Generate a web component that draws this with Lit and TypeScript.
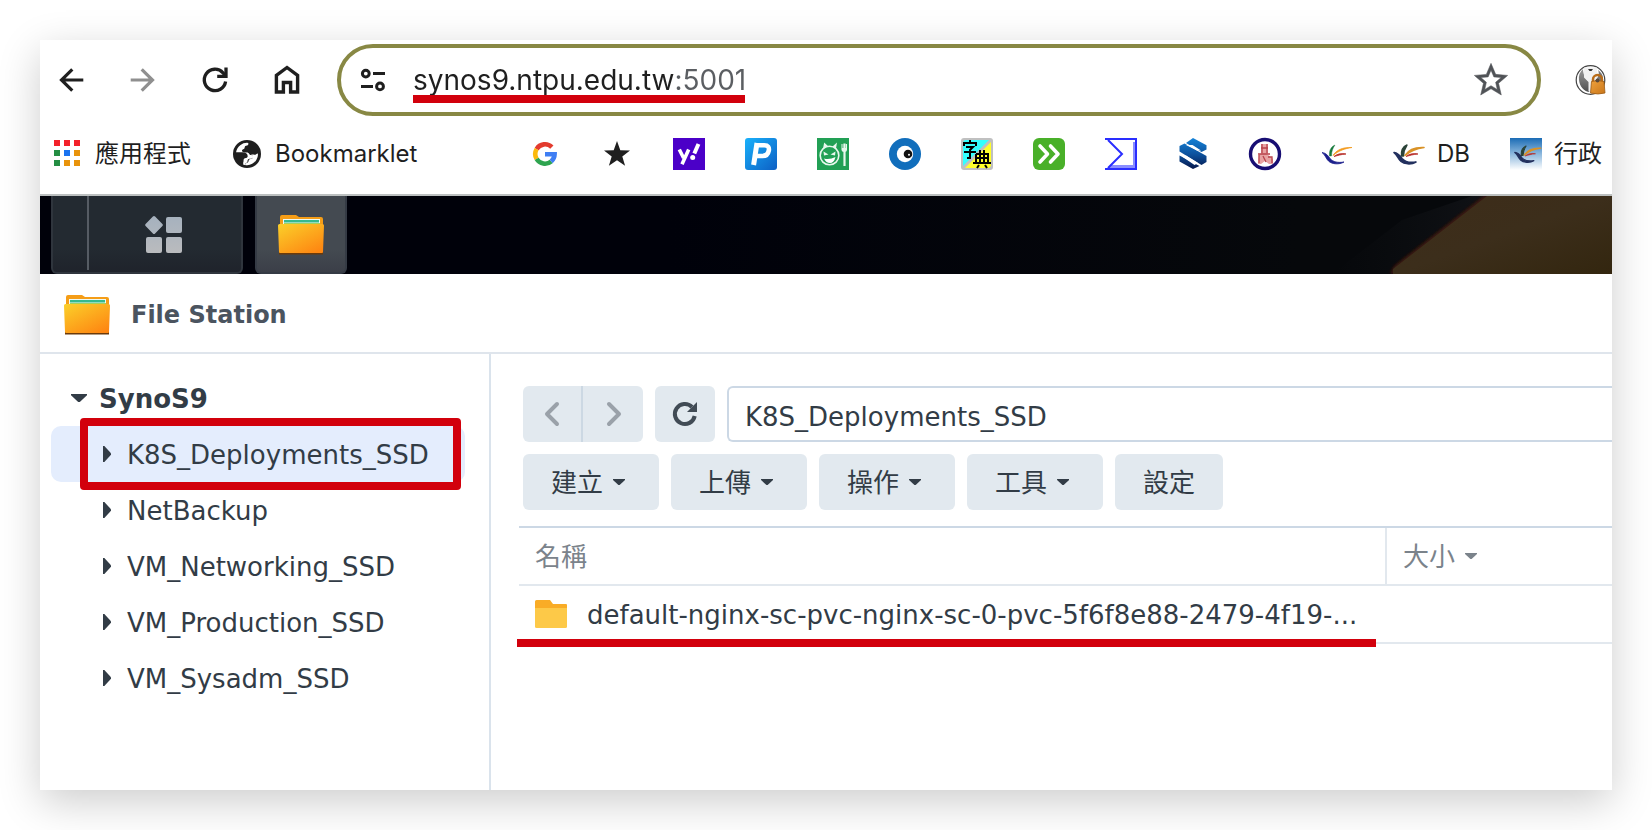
import { LitElement, html, css, svg, TemplateResult } from "lit";
import { customElement, property } from "lit/decorators.js";

const bird = (x: number, dark: boolean) => svg`
  <g transform="translate(${x} 0)" stroke-linejoin="round">
    <path d="M1 14.500c4 .5 6 3 8 6 3 3.500 8 4.500 14 3.500-5 3-12 2-15-.5-3-2.500-3.500-6.500-7-9z" fill=${dark ? "#22305e" : "#1c1f8c"} stroke=${dark ? "#22305e" : "#1c1f8c"} stroke-width=${dark ? 1.6 : 0.8}/>
    <path d="M8.500 18c-.5-5 1-9 5.500-11-2 3-3.500 6-3.500 11z" fill=${dark ? "#2a4338" : "#177a3c"} stroke=${dark ? "#2a4338" : "#177a3c"} stroke-width=${dark ? 1.4 : 0.4}/>
    <path d="M12 17.500c3-5 9-8.500 19-8-7 1-13 3-19 8z" fill="#f39a1f" stroke=${dark ? "#d99227" : "#f39a1f"} stroke-width=${dark ? 1.6 : 0.8}/>
    <path d="M13 18.500c3-2.500 7-3.500 12-2.500-5 .4-8 1.500-12 2.500z" fill="#b8262c" stroke="#b8322c" stroke-width=".8"/>
  </g>`;

const glyphs: Record<string, TemplateResult> = {
  back: html`<svg viewBox="0 0 32 32" fill="none" stroke="#1f1f1f" stroke-width="3.2"><path d="M28.300 16H6M17.300 5.300 6.500 16l10.800 10.700"/></svg>`,
  forward: html`<svg viewBox="0 0 32 32" fill="none" stroke="#8f8f8f" stroke-width="3.2"><path d="M3.700 16H26M14.700 5.300 25.500 16 14.700 26.700"/></svg>`,
  reload: html`<svg viewBox="0 0 32 32" fill="none" stroke="#1f1f1f" stroke-width="3.300"><path d="M26.600 17.500A10.700 10.700 0 1 1 24 8.800l2 2.600"/><path d="M27 3.600v8.700h-8.800"/></svg>`,
  home: html`<svg viewBox="0 0 32 32" fill="none" stroke="#1f1f1f" stroke-width="3.400"><path d="M5.400 11.300 16 3.500l10.600 7.800V28h-7V18.500h-7.200V28h-7z"/></svg>`,
  tune: html`<svg viewBox="0 0 24 24" fill="none" stroke="#1f1f1f" stroke-width="3"><circle cx="4.800" cy="5.600" r="3.400"/><path d="M12 5.600h12M0 18.400h12"/><circle cx="19" cy="18.400" r="3.400"/></svg>`,
  star: html`<svg viewBox="0 0 24 24" fill="#505357" stroke="#505357" stroke-width=".3"><path d="M22 9.240l-7.190-.62L12 2 9.190 8.630 2 9.240l5.460 4.730L5.820 21 12 17.270 18.180 21l-1.630-7.030L22 9.240zM12 15.400l-3.760 2.270 1-4.280-3.320-2.880 4.380-.38L12 6.100l1.710 4.040 4.380.38-3.320 2.880 1 4.280L12 15.400z"/></svg>`,
  keychain: html`<svg viewBox="0 0 32 32"><defs><linearGradient id="kg" x2="0" y2="1"><stop stop-color="#9a9a9a"/><stop offset="1" stop-color="#4e4e4e"/></linearGradient><linearGradient id="kl" x2="1" y2="1"><stop stop-color="#f0a23c"/><stop offset="1" stop-color="#c9761a"/></linearGradient></defs>
    <circle cx="15.500" cy="16" r="14.300" fill="#fff" stroke="#444" stroke-width="1.200"/>
    <path d="M8 5a12.500 12.500 0 0 0-4 11c.5 6 5 12 11 12V18C11 16 8 11 8 5z" fill="url(#kg)"/><path d="M23 6c2 4 0 9-5 12v11h3l7-15c0-3-2-6-5-8z" fill="#777"/>
    <path d="M9 3.500h13v10l-4 4.500v9l-2.500 2-2-2v-9L9 13.500z" fill="#f1f1f1"/><path d="M13 5h5l-1.500 2h-2z" fill="#333"/>
    <path d="M18 18v-2.500a4.500 4.500 0 0 1 9 0V18" fill="none" stroke="#b96c18" stroke-width="2.500"/><path d="M16.500 17.500q6-2 12.500 0l1 11.500q-7 2-14.500 0z" fill="url(#kl)" stroke="#9c5b14" stroke-width=".8"/><circle cx="22.500" cy="16.500" r="2" fill="#5b4a3a"/></svg>`,
  apps: html`<svg viewBox="0 0 32 32"><g fill="#f3222b"><path d="M3 2h6v6H3zM13 2h6v6h-6zM23 2h6v6h-6z"/></g><path d="M3 12h6v6H3zM3 22h6v6H3z" fill="#258e43"/><path d="M13 12h6v6h-6z" fill="#1a73f0"/><path d="M23 12h6v6h-6zM13 22h6v6h-6zM23 22h6v6h-6z" fill="#e8930b"/></svg>`,
  globe: html`<svg viewBox="0 0 32 32"><circle cx="16" cy="16" r="14" fill="#1f1f1f"/><path d="M5 14.500A11.200 11.200 0 0 1 17.300 4.900c.3 1.800-.3 2.400-2.300 2.900-1.800.4-.8 2.600-2.200 3.300-.8.5-2 .6-1.800 1.800.2 1.600 3.400 1.500 4.800 1.500 2.600 0 2.200 2.600 4.200 2.600 1.900 0 2.200 1.200 2 2.500-.4 1.800-2.400.9-4.200 1.500-2 .6-.6 3-2.200 3.700-1.200.6-1.800 1.200-1.600 2.200l-1.700-.1c-.3-1.800.3-2.800-.8-3.800-1-1-.4-2.500-1.600-3.600C8.500 18.300 6.500 16.800 5 14.500z" fill="#fff"/><path d="M5 14.300h6.500c3 0 5 1.200 5.200 3.700.1 1.800-1.400 2-2.800 2.200-1.600.2-1.200 2-1.400 3.300-.2 1-1 1.500-2 1.800A11.300 11.300 0 0 1 5 14.300z" fill="#1f1f1f"/><path d="M14 26.900c4.500 1 9-1.200 11.300-5 1.200-2 1.800-4 1.600-6.500-1.500 0-2 1.400-3.400 1.400-1.600 0-2-.6-3.500.2 2 .5 2.200 1.600 1.700 3-.4 1-1.700 1-3 1.300-1.500.4-.7 2.500-2 3.300-1.200.7-2.500.8-2.700 2.300z" fill="#fff"/></svg>`,
  google: html`<svg viewBox="0 0 32 32" fill="none" stroke-width="4.600"><path d="M7.600 11.150A9.700 9.700 0 0 1 22.860 9.140" stroke="#e33b2e"/><path d="M7.600 20.850a9.700 9.700 0 0 1 0-9.700" stroke="#fbb90b"/><path d="M22.200 23.430A9.700 9.700 0 0 1 7.600 20.850" stroke="#2ea44f"/><path d="M22.200 23.430A9.700 9.700 0 0 0 25.600 16.300H16" stroke="#3f7ef3"/></svg>`,
  solid: html`<svg viewBox="0 0 32 32"><path d="m16 3 3.300 9.200 9.700.3-7.700 6 2.800 9.300L16 22.300l-8.100 5.500 2.800-9.300-7.700-6 9.700-.3z" fill="#1f1f1f"/></svg>`,
  yahoo: html`<svg viewBox="0 0 32 32"><path d="M0 0h32v32H0z" fill="#4b00c8"/><g fill="none" stroke="#fff" stroke-width="3.600"><path d="m6.300 11.500 4.300 8.500M15.700 11.500 9 26.300"/><path d="m25.500 6-4.200 9.500" stroke-width="4"/></g><circle cx="19.700" cy="19.500" r="2.500" fill="#fff"/></svg>`,
  park: html`<svg viewBox="0 0 32 32"><defs><linearGradient id="pg" x2="1" y2="1"><stop stop-color="#19b1fb"/><stop offset="1" stop-color="#0d5fc4"/></linearGradient></defs><rect width="32" height="32" rx="3" fill="url(#pg)"/><path d="M10.800 7.200h8.500c4 0 5 2.300 4.500 5.300-.6 3.500-3 5.500-6.500 5.500h-6.500" fill="none" stroke="#fff" stroke-width="4.600"/><path d="m12 5-3.400 22" stroke="#fff" stroke-width="5"/></svg>`,
  devil: html`<svg viewBox="0 0 32 32"><path d="M0 0h32v32H0z" fill="#22a055"/><circle cx="12.500" cy="17.500" r="9.300" fill="none" stroke="#e8f7ed" stroke-width="1.600"/><path d="m6 10.500 1.200-6 4.300 4zM19 10.500l1-6-4.500 4z" fill="#e8f7ed"/><path d="m6.500 13.500 5 3-4.500 1zM18.500 13.500l-5 3 4.500 1z" fill="#e8f7ed"/><path d="M7 20.500q5.500 1.500 11.500-1.500-1.500 6-5.500 6T7 20.500z" fill="#fff"/><path d="M27.500 5.500V28" stroke="#e8f7ed" stroke-width="2.200"/><path d="M24.500 6h1v4h1.300V6h1.400v4h.8V6h1v6q0 2-2.700 2t-2.800-2z" fill="#e8f7ed"/></svg>`,
  eye: html`<svg viewBox="0 0 32 32"><circle cx="16" cy="16" r="16" fill="#116ebc"/><circle cx="16" cy="16" r="8.200" fill="#fff"/><circle cx="19" cy="16" r="4.300" fill="#111"/><circle cx="20" cy="16.800" r="1" fill="#fff"/></svg>`,
  dict: html`<svg viewBox="0 0 32 32"><rect width="32" height="32" rx="3" fill="#c0c0c0"/><path d="M4 2h24L2 28V4z" fill="#3ff"/><path d="M30 4v24l-2 2H4z" fill="#ffff2b"/><g fill="none" stroke="#000" stroke-width="2"><path d="M3 8V5h12v3M9 2v3M5 9h7l-3 3v8H6M3 14h12"/><path d="M15 16h12v9M15 16v9M19 12v13M23 12v13M15 20h12M12 25h18M18 27l-2 3M24 27l2 3"/></g></svg>`,
  chevrons: html`<svg viewBox="0 0 32 32"><rect width="32" height="32" rx="6" fill="#49b029"/><path d="m7 8 7.500 8L7 24M17.500 8l7.500 8-7.500 8" fill="none" stroke="#fff" stroke-width="3.600" stroke-linecap="round" stroke-linejoin="round"/></svg>`,
  sigma: html`<svg viewBox="0 0 32 32"><path d="M1 1h30v30H3l13-15z" fill="#fff"/><path d="M6 27h22V4h2.500v26H3z" fill="#8a8eff"/><path d="M0 1h31v30H0M3 2l14 14L3 30" fill="none" stroke="#2a2eff" stroke-width="2"/></svg>`,
  swirl: html`<svg viewBox="0 0 32 32"><defs><linearGradient id="sg" gradientUnits="userSpaceOnUse" x1="0" x2="0" y1="0" y2="31"><stop stop-color="#1583d8"/><stop offset=".55" stop-color="#0c4f9a"/><stop offset="1" stop-color="#06164a"/></linearGradient></defs><g fill="url(#sg)"><path d="M16 0 29.500 7.300v4.200l-5 2.500L9 5z"/><path d="m7.500 5.500 22 12.500v6l-5 3L2.500 13.500V8z"/><path d="M2.500 17.500 22.500 28 16 31 2.500 23.500z"/></g><path d="m9 7 6.500 0 8.500 5.500-4 0zM5 18.500l4-1 12 7.500-3.500 2z" fill="#fff"/></svg>`,
  seal: html`<svg viewBox="0 0 32 32"><circle cx="16" cy="16" r="14.500" fill="#fff" stroke="#180e73" stroke-width="3.400"/><path d="M12 6h7v10h-7zM10 16h8l6 5v5h-4l-4-3-4 3H9z" fill="#e8a3a3"/><path d="M13 6v9M18 6v9M12 10h7M9 16h12M10 17v8M14 18l3 6M19 19h4v6" fill="none" stroke="#b8434b" stroke-width="1.300"/></svg>`,
  bird: html`<svg viewBox="0 0 32 32">${bird(0, false)}</svg>`,
  birdDark: html`<svg viewBox="0 0 32 32">${bird(0, true)}</svg>`,
  birdSky: html`<svg viewBox="0 0 32 32"><defs><linearGradient id="bs" x2="0" y2="1"><stop stop-color="#1b6cb5"/><stop offset=".5" stop-color="#8db8dd"/><stop offset="1" stop-color="#fff"/></linearGradient></defs><path d="M0 0h32v32H0z" fill="url(#bs)"/><g transform="translate(4 2) scale(.86)">${bird(0, true)}</g></svg>`,
  grid: html`<svg viewBox="0 0 40 40"><defs><linearGradient id="gg" gradientUnits="userSpaceOnUse" x1="0" x2="0" y1="0" y2="40"><stop stop-color="#a5b1be"/><stop offset="1" stop-color="#bbbcbe"/></linearGradient></defs><g fill="url(#gg)"><path d="M9.900.6q1.100-1.100 2.200 0l7.300 7.300q1.100 1.100 0 2.200l-7.300 7.300q-1.100 1.100-2.200 0l-7.300-7.300q-1.100-1.100 0-2.200z" transform="translate(0 1)"/><rect x="23" y="2" width="16" height="16" rx="2"/><rect x="3" y="22" width="16" height="16" rx="2"/><rect x="23" y="22" width="16" height="16" rx="2"/></g></svg>`,
  files: html`<svg viewBox="0 0 48 42"><defs><linearGradient id="fg" x2=".8" y2="1"><stop stop-color="#fbd02a"/><stop offset="1" stop-color="#fe8712"/></linearGradient></defs><path d="M3 3q0-2 2-2h14l3 2h22q2 0 2 2v8H3z" fill="#f59d17"/><path d="M6 5h37v7H6z" fill="#eefaf3"/><path d="M7 6h35v2.500H7z" fill="#35b98f"/><path d="M7 9h36v2H7z" fill="#a3d05c"/><path d="M2 38h44v2.500H2z" fill="#6b3a0a"/><path d="M1 11.500q0-1.500 1.500-1.500h43q1.500 0 1.500 1.500L46 38q0 1-1 1H3q-1 0-1-1z" fill="url(#fg)"/></svg>`,
  prev: html`<svg viewBox="0 0 24 24"><path d="M17 2 7 12l10 10" fill="none" stroke="#9aa1a9" stroke-width="4" stroke-linecap="round" stroke-linejoin="round"/></svg>`,
  next: html`<svg viewBox="0 0 24 24"><path d="m8 2 10 10L8 22" fill="none" stroke="#9aa1a9" stroke-width="4" stroke-linecap="round" stroke-linejoin="round"/></svg>`,
  refresh: html`<svg viewBox="0 0 24 24"><path d="M21.700 14A10 10 0 1 1 19 5" fill="none" stroke="#414b55" stroke-width="4"/><path d="M24 0v10H14z" fill="#414b55"/></svg>`,
  folder: html`<svg viewBox="0 0 32 28"><path d="M0 1.500Q0 0 1.500 0H15l3 4h13q1 0 1 1v5H0z" fill="#f9ac26"/><path d="M0 8h32v18.500q0 1.500-1.500 1.500h-29Q0 28 0 26.500z" fill="#fdc948"/></svg>`,
};

@customElement("ui-icon")
class UiIcon extends LitElement {
  @property() name = "";
  static styles = css`
    :host { display: inline-flex; flex: none; width: 32px; height: 32px; }
    svg { display: block; width: 100%; height: 100%; overflow: visible; }
  `;
  render() {
    return glyphs[this.name] ?? html``;
  }
}

interface Bookmark { icon: string; title: string; label?: string; wide?: boolean; }

const bookmarks: Bookmark[] = [
  { icon: "apps", title: "應用程式", label: "應用程式" },
  { icon: "globe", title: "Bookmarklet", label: "Bookmarklet", wide: true },
  { icon: "google", title: "Google" },
  { icon: "solid", title: "Star" },
  { icon: "yahoo", title: "Yahoo" },
  { icon: "park", title: "P" },
  { icon: "devil", title: "Food" },
  { icon: "eye", title: "Eye" },
  { icon: "dict", title: "Dictionary" },
  { icon: "chevrons", title: "Next" },
  { icon: "sigma", title: "Sigma" },
  { icon: "swirl", title: "S" },
  { icon: "seal", title: "Seal" },
  { icon: "bird", title: "NTPU" },
  { icon: "birdDark", title: "DB", label: "DB" },
  { icon: "birdSky", title: "行政", label: "行政" },
];

@customElement("browser-chrome")
class BrowserChrome extends LitElement {
  static styles = css`
    :host { display: block; background: #fff; border-bottom: 2px solid #bcc0c0; font-family: Inter, "Noto Sans CJK TC", sans-serif; color: #1f1f1f; }
    button { padding: 0; border: 0; background: none; font: inherit; display: flex; flex: none; }
    .toolbar { display: flex; align-items: center; padding: 4px 5px 4px 15px; }
    .nav { display: flex; gap: 40px; margin-right: 34px; }
    .omnibox { flex: 1; min-width: 0; height: 72px; box-sizing: border-box; border: 4px solid #888844; border-radius: 36px; display: flex; align-items: center; padding: 0 26px 0 20px; }
    .tune { width: 24px; height: 24px; }
    .address { position: relative; flex: 1; min-width: 0; margin: 0 28px; display: flex; }
    .url { width: 100%; padding: 0; border: 0; outline: 0; font: 28px/40px Inter, sans-serif; color: #1f1f1f; -webkit-text-fill-color: transparent; background: linear-gradient(90deg, #1f1f1f 262px, #5b5e62 262px); -webkit-background-clip: text; background-clip: text; }
    .underline { position: absolute; left: 0; top: 35px; width: 332px; height: 8px; background: #d2000c; }
    .fav { width: 40px; height: 40px; }
    .ext { margin-left: 34px; }
    .bookmarks { display: flex; align-items: center; gap: 40px; height: 68px; padding: 0 0 6px 11px; white-space: nowrap; overflow: hidden; }
    .bookmark { display: flex; align-items: center; gap: 12px; flex: none; color: inherit; text-decoration: none; font-size: 24px; line-height: 32px; }
    .wide { width: 258px; }
  `;
  render() {
    return html`
      <div class="toolbar">
        <div class="nav">
          <button aria-label="Back"><ui-icon name="back"></ui-icon></button>
          <button aria-label="Forward"><ui-icon name="forward"></ui-icon></button>
          <button aria-label="Reload"><ui-icon name="reload"></ui-icon></button>
          <button aria-label="Home"><ui-icon name="home"></ui-icon></button>
        </div>
        <div class="omnibox">
          <button aria-label="Site information"><ui-icon class="tune" name="tune"></ui-icon></button>
          <div class="address">
            <input class="url" aria-label="Address" .value=${"synos9.ntpu.edu.tw:5001"} />
            <span class="underline"></span>
          </div>
          <button aria-label="Bookmark this page"><ui-icon class="fav" name="star"></ui-icon></button>
        </div>
        <button class="ext" aria-label="Password extension"><ui-icon name="keychain"></ui-icon></button>
      </div>
      <nav class="bookmarks">
        ${bookmarks.map((b) => html`<a class="bookmark ${b.wide ? "wide" : ""}" href="#" aria-label=${b.title}><ui-icon name=${b.icon}></ui-icon>${b.label ?? ""}</a>`)}
      </nav>
    `;
  }
}

@customElement("desktop-taskbar")
class DesktopTaskbar extends LitElement {
  static styles = css`
    :host { display: flex; height: 78px; padding-left: 11px; background: linear-gradient(90deg, #00010a 40%, #06080b 80%); }
    button { padding: 0; flex: none; display: flex; align-items: center; justify-content: center; box-sizing: border-box; border: 2px solid #2f353d; border-top: 0; border-radius: 0 0 6px 6px; background: linear-gradient(#232a31 70%, #1f232b); }
    .menu { width: 192px; margin-right: 12px; justify-content: flex-start; align-items: stretch; }
    .edge { width: 34px; border-right: 2px solid #565c64; margin-bottom: 2px; }
    .grid { width: 40px; height: 40px; margin: 19px 0 0 54px; }
    .task { width: 92px; padding-top: 2px; background: linear-gradient(#444a51 70%, #3b3f48); border-color: #353b45; }
    .files { width: 48px; height: 42px; }
    .wall { margin-left: auto; width: 400px; height: 78px; }
  `;
  render() {
    return html`
      <button class="menu" aria-label="Main menu"><span class="edge"></span><ui-icon class="grid" name="grid"></ui-icon></button>
      <button class="task" aria-label="File Station"><ui-icon class="files" name="files"></ui-icon></button>
      <svg class="wall" viewBox="0 0 400 78" preserveAspectRatio="none">
        <defs>
          <linearGradient id="wood" x2="1" y2="1"><stop stop-color="#3d2c19"/><stop offset=".5" stop-color="#3c2e1b"/><stop offset="1" stop-color="#33260f"/></linearGradient>
          <linearGradient id="sheen" x2="1"><stop stop-color="#0d0f12" stop-opacity="0"/><stop offset="1" stop-color="#101216"/></linearGradient>
          <filter id="soft"><feGaussianBlur stdDeviation="1.500"/></filter>
        </defs>
        <path d="M120 78 190 24 260 0h15l-94 78z" fill="url(#sheen)"/>
        <path d="M275 0 184 71l-4 7" fill="none" stroke="#3f1610" stroke-width="4" filter="url(#soft)"/>
        <path d="M275 0h125v78H181v-5z" fill="url(#wood)"/>
      </svg>
    `;
  }
}

@customElement("file-station")
class FileStation extends LitElement {
  static styles = css`
    :host { display: flex; flex-direction: column; flex: 1; background: #fff; color: #323c46; font-family: "DejaVu Sans", "Noto Sans CJK TC", sans-serif; font-size: 26px; line-height: 32px; }
    button { margin: 0; padding: 0; border: 0; background: none; font: inherit; color: inherit; cursor: pointer; }
    .title { display: flex; align-items: center; gap: 20px; box-sizing: border-box; height: 80px; padding: 4px 0 0 23px; border-bottom: 2px solid #dfe5ec; }
    h1 { margin: 0; font: bold 24px/32px "DejaVu Sans", sans-serif; color: #4b545f; }
    .files { width: 48px; height: 42px; }
    .body { display: flex; flex: 1; }
    .side { flex: none; box-sizing: border-box; width: 451px; padding: 16px 24px 0 11px; border-right: 2px solid #dae3ec; }
    ul { list-style: none; margin: 0; padding: 0; }
    .item { position: relative; }
    .node { display: flex; align-items: center; width: 100%; height: 56px; border-radius: 10px; text-align: left; white-space: nowrap; }
    .label { padding-top: 2px; }
    .root { padding-left: 20px; gap: 12px; font-weight: bold; }
    .leaf { padding-left: 52px; gap: 16px; }
    .selected { background: #e4edfd; }
    .caret { flex: none; width: 12px; height: 6px; background: currentColor; clip-path: polygon(0 0, 100% 0, 100% 17%, 55% 100%, 45% 100%, 0 17%); }
    .open { width: 16px; height: 8px; }
    .closed { flex: none; width: 8px; height: 16px; background: currentColor; clip-path: polygon(0 0, 17% 0, 100% 45%, 100% 55%, 17% 100%, 0 100%); }
    .frame { position: absolute; inset: -8px 4px -8px 29px; border: 8px solid #d2000c; border-radius: 4px; pointer-events: none; }
    .main { flex: 1; min-width: 0; padding-top: 32px; }
    .row { display: flex; gap: 12px; margin: 0 0 12px 32px; }
    .btn { display: flex; align-items: center; justify-content: center; height: 56px; border-radius: 6px; background: #e2e9ef; }
    .pair { display: flex; flex: none; }
    .prev { width: 60px; border-radius: 6px 0 0 6px; border-right: 2px solid #ccd8e3; box-sizing: border-box; }
    .next { width: 60px; border-radius: 0 6px 6px 0; }
    .refresh { width: 60px; flex: none; }
    .mini { width: 24px; height: 24px; }
    .path { flex: 1; min-width: 0; box-sizing: border-box; height: 56px; padding: 6px 16px 0; border: 2px solid #ccd8e5; border-right: 0; border-radius: 6px 0 0 6px; font: inherit; color: inherit; outline: 0; }
    .action { padding: 0 28px; }
    .drop { gap: 10px; padding-right: 34px; }
    .tablebox { margin: 16px 0 0 28px; position: relative; }
    table { width: 100%; table-layout: fixed; border-collapse: separate; border-spacing: 0; border-top: 2px solid #ccd8e5; }
    th, td { height: 56px; padding: 0 16px; border-bottom: 2px solid #e2e8ee; text-align: left; font-weight: normal; box-sizing: content-box; }
    th { color: #7b838b; }
    .name { width: 834px; border-right: 2px solid #e2e8ee; }
    .sort { display: flex; align-items: center; gap: 10px; }
    .file { display: flex; align-items: center; gap: 20px; white-space: nowrap; color: inherit; text-decoration: none; }
    .folder { width: 32px; height: 28px; }
    .line { position: absolute; left: -2px; bottom: -3px; width: 859px; height: 8px; background: #d2000c; }
  `;
  private shares = ["K8S_Deployments_SSD", "NetBackup", "VM_Networking_SSD", "VM_Production_SSD", "VM_Sysadm_SSD"];
  private actions = ["建立", "上傳", "操作", "工具"];
  render() {
    return html`
      <header class="title"><ui-icon class="files" name="files"></ui-icon><h1>File Station</h1></header>
      <div class="body">
        <nav class="side">
          <button class="node root"><span class="caret open"></span><span class="label">SynoS9</span></button>
          <ul>
            ${this.shares.map((s, i) => html`<li class="item">
              <button class="node leaf ${i === 0 ? "selected" : ""}"><span class="closed"></span><span class="label">${s}</span></button>
              ${i === 0 ? html`<span class="frame"></span>` : ""}
            </li>`)}
          </ul>
        </nav>
        <main class="main">
          <div class="row">
            <div class="pair">
              <button class="btn prev" aria-label="Previous"><ui-icon class="mini" name="prev"></ui-icon></button>
              <button class="btn next" aria-label="Next"><ui-icon class="mini" name="next"></ui-icon></button>
            </div>
            <button class="btn refresh" aria-label="Refresh"><ui-icon class="mini" name="refresh"></ui-icon></button>
            <input class="path" aria-label="Path" .value=${"K8S_Deployments_SSD"} />
          </div>
          <div class="row">
            ${this.actions.map((a) => html`<button class="btn action drop"><span class="label">${a}</span><span class="caret"></span></button>`)}
            <button class="btn action"><span class="label">設定</span></button>
          </div>
          <div class="tablebox">
            <table>
              <thead><tr><th class="name"><span class="sort"><span class="label">名稱</span></span></th><th><span class="sort"><span class="label">大小</span><span class="caret"></span></span></th></tr></thead>
              <tbody><tr>
                <td><a class="file" href="#"><ui-icon class="folder" name="folder"></ui-icon><span class="label">default-nginx-sc-pvc-nginx-sc-0-pvc-5f6f8e88-2479-4f19-...</span></a></td>
                <td></td>
              </tr></tbody>
            </table>
            <span class="line"></span>
          </div>
        </main>
      </div>
    `;
  }
}

@customElement("app-root")
class AppRoot extends LitElement {
  static styles = css`
    :host { display: flex; box-sizing: border-box; min-height: 100vh; padding: 40px; background: #fff; overflow: hidden; }
    .window { display: flex; flex-direction: column; flex: 1; min-width: 0; background: #fff; box-shadow: 0 12px 40px rgba(0, 0, 0, 0.2); }
  `;
  render() {
    return html`
      <div class="window">
        <browser-chrome></browser-chrome>
        <desktop-taskbar></desktop-taskbar>
        <file-station></file-station>
      </div>
    `;
  }
}
